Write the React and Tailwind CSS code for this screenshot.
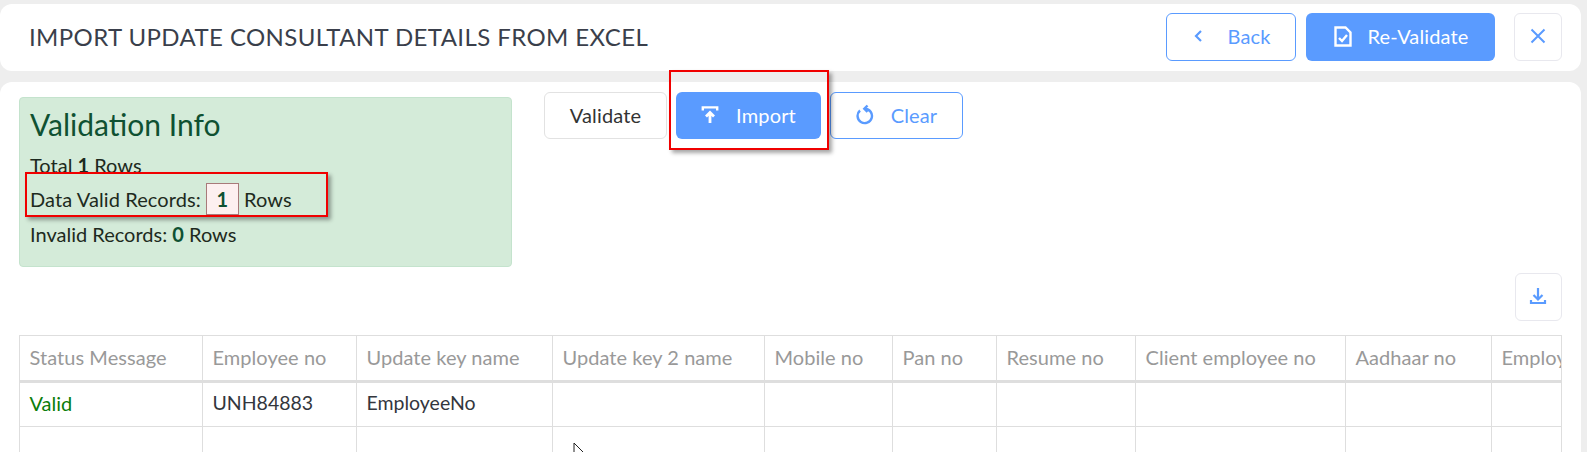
import React from "react";

const cols = [
  ["Status Message", 183],
  ["Employee no", 154],
  ["Update key name", 196],
  ["Update key 2 name", 212],
  ["Mobile no", 128],
  ["Pan no", 104],
  ["Resume no", 139],
  ["Client employee no", 210],
  ["Aadhaar no", 146],
  ["Employee name", 160],
];

const F = "font-['Lato','Noto_Sans',sans-serif]";

function Btn({ kind, className = "", children }) {
  const k = {
    solid: "bg-[#5a9bff] text-white",
    outline: "bg-white border border-[#5a9bff] text-[#5a9bff]",
    plain: "bg-white border border-[#e2e2e2] text-[#333]",
    ghost: "bg-white border border-[#e8e8ee] text-[#5a9bff]",
  }[kind];
  return (
    <button className={`flex items-center justify-center rounded-md pb-[2px] text-[20px] tracking-[0.15px] ${k} ${className}`}>
      {children}
    </button>
  );
}

export default function App() {
  return (
    <div className={`${F} h-[452px] overflow-hidden bg-[#eeeeee] pt-1 pr-[6px] text-[20px]`}>
      <div className="flex h-[67px] items-center rounded-xl bg-white pb-px pl-[29px] pr-[19px]">
        <h1 className="flex-1 text-[24px] font-normal tracking-[0.4px] text-[#3a3f4b]">
          IMPORT UPDATE CONSULTANT DETAILS FROM EXCEL
        </h1>
        <Btn kind="outline" className="mr-[10px] h-12 w-[130px] gap-[23px] pl-[2px]">
          <svg width="11" height="14" viewBox="0 0 11 14" fill="none" stroke="currentColor" strokeWidth="2.200">
            <path d="M8 2 3 7l5 5" />
          </svg>
          Back
        </Btn>
        <Btn kind="solid" className="mr-[19px] h-12 w-[189px] gap-[15px] pl-[2px] tracking-[0.4px]">
          <svg width="18" height="21" viewBox="0 0 18 21" fill="none" stroke="currentColor" strokeWidth="2.400">
            <path d="M1.500 1.500h10l5 5v13h-15z" />
            <path d="M5 12l3 3 5-6" />
          </svg>
          Re-Validate
        </Btn>
        <Btn kind="ghost" className="h-12 w-12">
          <svg width="16" height="16" viewBox="0 0 16 16" fill="none" stroke="currentColor" strokeWidth="2">
            <path d="M1.500 1.500l13 13M14.500 1.500l-13 13" />
          </svg>
        </Btn>
      </div>

      <div className="mt-[11px] h-[400px] rounded-t-xl bg-white pl-[19px] pr-[19px]">
        <div className="flex items-start">
          <div className="mt-[15px] h-[170px] w-[493px] rounded border border-[#c4e3cd] bg-[#d4ebd9] px-[10px] pt-[7px] text-[#1d2a20]">
            <h2 className="text-[30px] leading-[38px] text-[#0f5132]">Validation Info</h2>
            <p className="mt-[10px] h-[24px] leading-[24px]">
              Total <b className="font-bold">1</b> Rows
            </p>
            <div className="relative mt-[4px] flex h-[36px] items-center tracking-[0.1px]">
              Data Valid Records:
              <span className="mx-[5px] flex h-8 w-[33px] items-center justify-center border border-[#a87a7a] bg-[#fdf0f0] font-bold text-[#0f5132]">
                1
              </span>
              Rows
              <span className="absolute -left-[5px] -top-[9px] h-[45px] w-[303px] border-2 border-[#f00000] shadow-[3px_3px_4px_rgba(0,0,0,0.35)]" />
            </div>
            <p className="mt-[5px] h-[24px] leading-[24px]">
              Invalid Records: <b className="font-bold text-[#0f5132]">0</b> Rows
            </p>
          </div>

          <div className="ml-[32px] mt-[10px] flex gap-[9px]">
            <Btn kind="plain" className="h-[47px] w-[123px]">Validate</Btn>
            <div className="relative">
              <Btn kind="solid" className="h-[47px] w-[145px] gap-[17px]">
                <svg width="18" height="19" viewBox="0 0 18 19" fill="none" stroke="currentColor" strokeWidth="2.800">
                  <path d="M1.800 5.500V2.400h14.400v3.100" strokeWidth="2.400" />
                  <path d="M9 18V8M5 11.500l4-4 4 4" />
                </svg>
                Import
              </Btn>
              <span className="absolute -left-[7px] -top-[22px] h-[80px] w-[160px] border-2 border-[#f00000] shadow-[3px_3px_4px_rgba(0,0,0,0.35)]" />
            </div>
            <Btn kind="outline" className="h-[47px] w-[133px] gap-[17px]">
              <svg width="18" height="21" viewBox="0 0 18 21" fill="none" stroke="currentColor" strokeWidth="2.400">
                <path d="M4 6.500a7.200 7.200 0 1 0 5-1.800" />
                <path d="M11.500 1.500 8.300 4.700l3.200 3.200" />
              </svg>
              Clear
            </Btn>
          </div>
        </div>

        <div className="mt-[6px] flex justify-end pr-[0.500px]">
          <Btn kind="ghost" className="h-12 w-[47px]">
            <svg width="18" height="18" viewBox="0 0 18 18" fill="none" stroke="currentColor" strokeWidth="2.200">
              <path d="M9 1v11M4.500 8 9 12.500 13.500 8" />
              <path d="M2 13v3h14v-3" />
            </svg>
          </Btn>
        </div>

        <div className="relative mt-[14px] overflow-hidden">
          <table className="table-fixed border-collapse" style={{ width: 1632 }}>
            <colgroup>
              {cols.map(([n, w]) => (
                <col key={n} style={{ width: w }} />
              ))}
            </colgroup>
            <thead>
              <tr className="h-[46px]">
                {cols.map(([n]) => (
                  <th key={n} className="overflow-hidden whitespace-nowrap border border-b-[3px] border-[#dedede] pb-[3px] pl-[9.500px] pr-[10px] text-left text-[20px] font-normal tracking-[0.05px] text-[#999999]">
                    {n}
                  </th>
                ))}
              </tr>
            </thead>
            <tbody>
              <tr className="h-[45px]">
                {cols.map(([n], i) => (
                  <td
                    key={n}
                    className={`border border-[#dedede] pb-[3px] pl-[9.500px] pr-[10px] ${i === 0 ? "text-[20px] text-[#0a7d0a]" : "text-[19.500px] text-[#33363d]"}`}
                  >
                    {i === 0 ? "Valid" : i === 1 ? "UNH84883" : i === 2 ? "EmployeeNo" : ""}
                  </td>
                ))}
              </tr>
              <tr className="h-[46px]">
                {cols.map(([n]) => (
                  <td key={n} className="border border-[#dedede]" />
                ))}
              </tr>
            </tbody>
          </table>
          <div className="absolute right-0 top-0 h-full w-px bg-[#dedede]" />
          <svg className="absolute left-[554px] top-[107px]" width="13" height="20" viewBox="0 0 13 20" fill="#fff" stroke="#222" strokeWidth="1">
            <path d="M1 1v15l4-3.500 2.500 6 2-1-2.500-5.500h5z" />
          </svg>
        </div>
      </div>
    </div>
  );
}
